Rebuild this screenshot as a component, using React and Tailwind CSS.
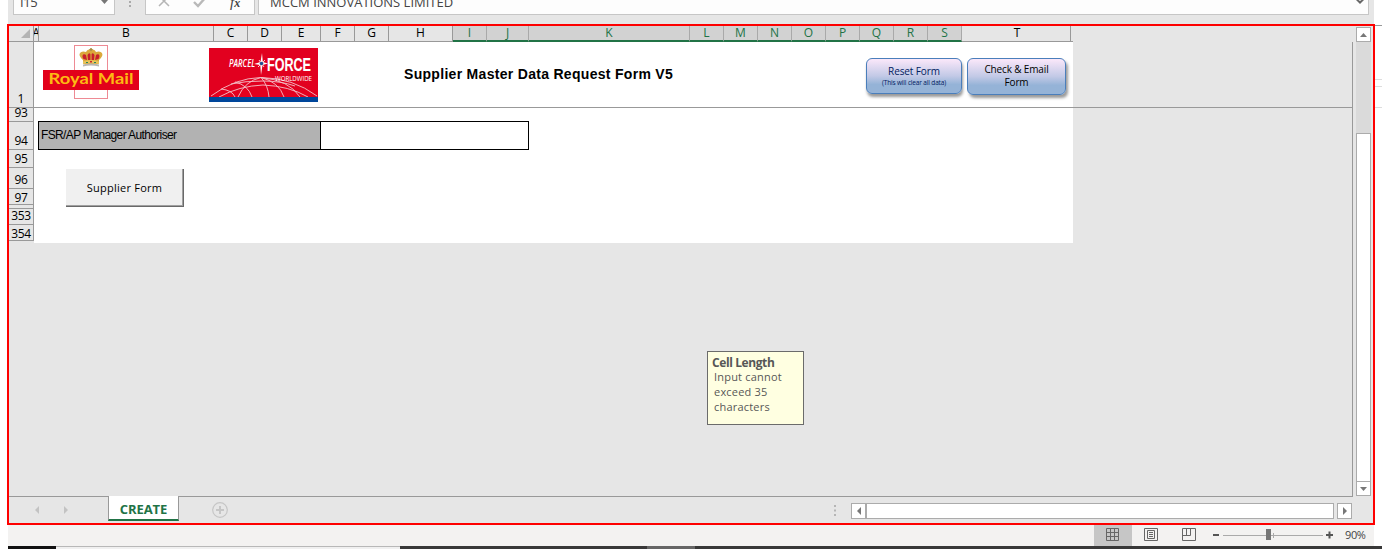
import React from "react";

const UI = "font-['Open_Sans','Noto_Sans',sans-serif]";

const columns = [
  ["A", "w-[5px] overflow-hidden"], ["B", "w-[175px]"], ["C", "w-[34px]"], ["D", "w-[34px]"], ["E", "w-[39px]"],
  ["F", "w-[34px]"], ["G", "w-[34px]"], ["H", "w-[64px]"], ["I", "w-[34px]", 1], ["J", "w-[42px]", 1],
  ["K", "w-[161px]", 1], ["L", "w-[34px]", 1], ["M", "w-[34px]", 1], ["N", "w-[34px]", 1],
  ["O", "w-[34px]", 1], ["P", "w-[34px]", 1], ["Q", "w-[34px]", 1], ["R", "w-[34px]", 1],
  ["S", "w-[34px]", 1], ["T", "w-[109px] pl-[2px]"],
];

const rows = [
  ["93", "h-[14px]"], ["94", "h-[28px]"], ["95", "h-[18px]"], ["96", "h-[21px]"], ["97", "h-[16px]"],
  ["", "h-[4px]"], ["353", "h-[16px]"], ["354", "h-[16px]"],
];

function FormulaBar() {
  return (
    <div className="flex h-[24px] items-start bg-white pl-2">
      <div className="flex h-[24px] w-[1366px] items-start bg-[#e6e6e6] pl-[5px]">
        <div className="flex h-[15px] w-[102px] justify-between border border-t-0 border-[#c6c6c6] bg-[#fdfdfd] pl-[6px] pr-[5px]">
          <span className="-mt-[7px] text-[13px] leading-[18px] tracking-[-0.4px] text-[#444]">I15</span>
          <svg className="h-[5px] w-[9px]" viewBox="0 0 9 5"><path d="M1 0H8L4.5 4Z" fill="#777" /></svg>
        </div>
        <svg className="ml-[14px] h-[10px] w-[3px]" viewBox="0 0 3 10"><path d="M0 1h2v2H0zM0 5h2v2H0z" fill="#aaa" /></svg>
        <div className="ml-[13px] flex h-[15px] w-[110px] border border-t-0 border-[#c6c6c6] bg-[#fdfdfd]">
          <svg className="h-[14px] w-[74px]" viewBox="0 0 74 14" fill="none">
            <path d="M13 -4L23 6M23 -4L13 6" stroke="#b5b5b5" strokeWidth="1.5" />
            <path d="M48 2L52 6L60 -3" stroke="#b9b9b9" strokeWidth="2.4" />
          </svg>
          <span className="-mt-[7px] ml-[10px] font-['Liberation_Serif',serif] text-[15px] italic leading-[18px] text-[#444]">f<span className="text-[12px] font-bold">x</span></span>
        </div>
        <div className="ml-[3px] flex h-[15px] w-[1111px] justify-between border border-t-0 border-[#c6c6c6] bg-[#fdfdfd] pl-[11px] pr-[4px]">
          <span className="-mt-[7px] text-[13px] leading-[18px] text-[#444]">MCCM INNOVATIONS LIMITED</span>
          <svg className="h-[4px] w-[8px]" viewBox="0 0 8 4"><path d="M0 0H2.5L4 1L5.5 0H8L4 4Z" fill="#666" /></svg>
        </div>
      </div>
    </div>
  );
}

function ColumnHeaders() {
  return (
    <div className="flex h-[16px]">
      <div className="flex w-[25px] items-end justify-end border-b border-r border-[#999] pb-[3px] pr-[3px]">
        <svg className="h-[9px] w-[9px]" viewBox="0 0 9 9"><path d="M9 0V9H0Z" fill="#b4b4b4" /></svg>
      </div>
      {columns.map(([name, width, on]) => (
        <div
          key={name}
          className={`${width} flex shrink-0 justify-center border-r text-[12px] leading-[14px] ${
            on ? "border-r-[#a9a9a9] border-b-2 border-b-[#217346] bg-[#d2d2d2] text-[#217346]" : "border-r-[#999] border-b border-b-[#999] text-black"
          }`}
        >
          {name}
        </div>
      ))}
      <div className="w-[2px] border-b border-[#999]" />
    </div>
  );
}

function RoyalMailLogo() {
  return (
    <svg className="mt-[3px] ml-[9px] h-[54px] w-[96px] shrink-0" viewBox="0 0 96 54">
      <rect x="31.5" y=".5" width="33" height="53" fill="#fff" stroke="#ee8a94" />
      <g>
        <path d="M40 15C33 9 38 5 43 7C45 4 47 4 48 6C49 4 51 4 53 7C58 5 63 9 56 15L56 19H40Z" fill="#dba83c" />
        <path d="M40.5 14C38 10 41 8 43 10L44 15ZM45 15L44.5 10Q46 7 47.4 9V15ZM48.6 15V9Q50 7 51.5 10L51 15ZM55.5 14C58 10 55 8 53 10L52 15Z" fill="#c8202c" />
        <path d="M47.2 3h1.6v3h-1.6zM46.3 4h3.4v1h-3.4z" fill="#a88a40" />
        <path d="M40 16.5Q48 14 56 16.5V19Q48 17 40 19Z" fill="#e8c45c" />
        <path d="M40 19.5Q48 17.5 56 19.5V21.5Q48 19.5 40 21.5Z" fill="#b9b6b2" />
        <path d="M43 17h2v1h-2zM51 17h2v1h-2z" fill="#26865a" />
        <path d="M47 16h2v1.4h-2z" fill="#cf2030" />
      </g>
      <rect y="25" width="96" height="20" fill="#e2001a" />
      <text x="5.5" y="39" textLength="85" lengthAdjust="spacingAndGlyphs" fill="#fdb913" fontFamily="Lato, sans-serif" fontWeight="700" fontSize="15">Royal Mail</text>
    </svg>
  );
}

function ParcelforceLogo() {
  return (
    <svg className="mt-[6px] ml-[70px] h-[54px] w-[109px] shrink-0" viewBox="0 0 109 54">
      <rect width="109" height="54" fill="#e2001f" />
      <g fill="none" stroke="#f3c3c9" strokeWidth=".9">
        <path d="M2 48Q26 30 52 29.5Q84 30 108 48" />
        <path d="M12 41Q23 42 26 49M26 34Q39 37 43 49M52 29.5Q36 33 29 49M52 29.5Q59 37 60 49M52 29.5Q70 34 75 49M52 29.5Q80 32 91 49" />
        <path d="M10 49Q30 38 54 37Q80 38 99 49M22 36Q36 33 54 33Q72 33 86 38" />
      </g>
      <rect y="49" width="109" height="5" fill="#00479b" />
      <g fill="#fff" fontFamily="'Open Sans', sans-serif">
        <text x="20" y="19" fontSize="11" fontStyle="italic" fontWeight="600" textLength="26" lengthAdjust="spacingAndGlyphs">PARCEL</text>
        <text x="58" y="23" fontSize="19" fontWeight="600" fontFamily="'Liberation Sans', sans-serif" stroke="#fff" strokeWidth=".1" textLength="44" lengthAdjust="spacingAndGlyphs">FORCE</text>
        <text x="66" y="32.5" fontSize="8" textLength="37" lengthAdjust="spacingAndGlyphs">WORLDWIDE</text>
      </g>
      <path d="M53 5L53.8 14L59 15.5L53.5 17L52 27L51.3 17L45 16L51.5 14Z" fill="#fff" />
      <path d="M50 12L55 19M56 12L49 19" stroke="#fff" strokeWidth=".8" />
      <circle cx="52.5" cy="15.5" r="1.8" fill="#234c91" />
    </svg>
  );
}

function FrozenRow() {
  return (
    <div className="flex h-[66px] border-b border-[#999]">
      <div className="flex w-[25px] items-end justify-center border-r border-[#999] text-[12px] leading-[16px]">1</div>
      <div className="flex w-[1039px] bg-white">
        <RoyalMailLogo />
        <ParcelforceLogo />
        <h1 className="mt-[24px] ml-[86px] w-[272px] shrink-0 whitespace-nowrap font-['Liberation_Sans',sans-serif] text-[14px] font-bold leading-[17px] tracking-[0.3px] text-black">
          Supplier Master Data Request Form V5
        </h1>
        <button className="mt-[16px] ml-[190px] flex h-[36px] w-[96px] shrink-0 flex-col items-center rounded-[6px] border border-[#4a7ebb] bg-linear-to-b from-[#fbe8fa] via-[#c2c9e6] to-[#95b3d7] to-75% pt-[6px] text-[#002060] shadow-[1px_3px_3px_rgba(0,0,0,0.4)]">
          <span className="text-[10px] leading-[13px] tracking-[-0.1px]">Reset Form</span>
          <span className="whitespace-nowrap text-[6.5px] leading-[10px] tracking-[-0.15px]">(This will clear all data)</span>
        </button>
        <button className="mt-[16px] ml-[5px] h-[37px] w-[99px] shrink-0 rounded-[6px] border border-[#4a7ebb] bg-linear-to-b from-[#fbe8fa] via-[#c2c9e6] to-[#95b3d7] to-75% pb-px text-[10px] leading-[13px] tracking-[-0.15px] text-black shadow-[2px_3px_3px_rgba(0,0,0,0.4)]">
          Check &amp; Email
          <br />
          Form
        </button>
      </div>
    </div>
  );
}

function SheetRows() {
  return (
    <div className="flex h-[135px]">
      <div className="w-[25px] shrink-0 text-[12px]">
        {rows.map(([label, height]) => (
          <div key={label} className={`${height} flex items-end justify-center border-b border-r border-[#999]`}>
            <span className={`tracking-[-0.4px] ${label === "97" || label === "354" ? "leading-[13px]" : "leading-[17px]"}`}>{label}</span>
          </div>
        ))}
      </div>
      <div className="w-[1039px] bg-white pt-[13px] pl-[4px]">
        <div className="flex h-[29px] w-[491px] border border-black font-['Liberation_Sans',sans-serif] text-[12px] leading-[26px] text-black">
          <div className="w-[282px] whitespace-nowrap border-r border-black bg-[#b2b2b2] pl-[2px]"><span className="tracking-[-0.63px]">FSR/AP Manager Authoriser</span></div>
        </div>
        <button className="mt-[19px] ml-[28px] h-[38px] w-[118px] border-b border-r border-[#696969] bg-[#f0f0f0] pt-px text-[11px] tracking-[0.25px] text-black shadow-[inset_-1px_-1px_0_#a0a0a0]">
          Supplier Form
        </button>
      </div>
    </div>
  );
}

function VerticalScroll() {
  return (
    <div className="flex w-[15px] flex-col bg-[#dadada]">
      <div className="flex h-[15px] items-center justify-center border border-[#ababab] bg-white">
        <svg className="h-[4px] w-[7px]" viewBox="0 0 7 4"><path d="M3.5 0L7 4H0Z" fill="#777" /></svg>
      </div>
      <div className="mt-[91px] h-[349px] border border-[#ababab] bg-white" />
      <div className="flex h-[14px] items-center justify-center border border-t-0 border-[#ababab] bg-white">
        <svg className="h-[4px] w-[7px]" viewBox="0 0 7 4"><path d="M0 0H7L3.5 4Z" fill="#777" /></svg>
      </div>
    </div>
  );
}

function TabBar() {
  return (
    <div className="flex h-[27px]">
      <svg className="mt-[9px] ml-[26px] h-[8px] w-[34px]" viewBox="0 0 34 8"><path d="M4 0V8L0 4ZM29 0V8L33 4Z" fill="#c3c3c3" /></svg>
      <div className="-mt-px ml-[39px] h-[25px] w-[71px] border-x border-b-2 border-x-[#999] border-b-[#217346] bg-white text-center text-[13px] font-bold leading-[26px] text-[#217346]">
        <span className="tracking-[-0.1px]">CREATE</span>
      </div>
      <svg className="mt-[5px] ml-[33px] h-[16px] w-[16px]" viewBox="0 0 16 16" fill="none" stroke="#c6c6c6"><circle cx="8" cy="8" r="7.3" strokeWidth="1.2" /><path d="M4 8H12M8 4V12" strokeWidth="2" /></svg>
      <svg className="mt-[8px] ml-[606px] h-[11px] w-[2px]" viewBox="0 0 2 11"><path d="M0 0h2v2H0zM0 4.5h2v2H0zM0 9h2v2H0z" fill="#b5b5b5" /></svg>
      <div className="mt-[6px] ml-[15px] flex h-[16px]">
        <div className="flex w-[15px] items-center justify-center border border-[#ababab] bg-white">
          <svg className="h-[8px] w-[4px]" viewBox="0 0 4 8"><path d="M4 0V8L0 4Z" fill="#777" /></svg>
        </div>
        <div className="w-[468px] border border-[#ababab] bg-white" />
        <div className="ml-[3px] flex w-[15px] items-center justify-center border border-[#ababab] bg-white">
          <svg className="h-[8px] w-[4px]" viewBox="0 0 4 8"><path d="M0 0V8L4 4Z" fill="#777" /></svg>
        </div>
      </div>
    </div>
  );
}

function StatusBar() {
  return (
    <div className="ml-2 flex h-[21px] w-[1366px] bg-[#f3f2f1]">
      <div className="ml-[1086px] w-[38px] bg-[#c6c6c6] pt-[3px] pl-[12px]">
        <svg className="h-[13px] w-[13px]" viewBox="0 0 13 13" fill="none" stroke="#666"><path d="M.5 .5H12.5V12.5H.5ZM4.5 0V13M8.5 0V13M0 4.5H13M0 8.5H13" /></svg>
      </div>
      <svg className="mt-[3px] ml-[12px] h-[13px] w-[14px]" viewBox="0 0 14 13" fill="none" stroke="#666"><path d="M.5 .5H13.5V12.5H.5ZM3.5 2.5H10.5V10.5H3.5ZM5 4.5H9M5 6.5H9M5 8.5H9" /></svg>
      <svg className="mt-[3px] ml-[24px] h-[13px] w-[14px]" viewBox="0 0 14 13" fill="none" stroke="#666"><path d="M.5 .5H13.5V12.5H.5ZM.5 7.5H8.5V.5M4.5 .5V7.5" /></svg>
      <svg className="mt-[3px] ml-[17px] h-[14px] w-[122px]" viewBox="0 0 122 14"><path d="M0 6h6v2H0zM113 6h7v2h-7zM115.5 3.5h2v7h-2z" fill="#555" /><path d="M10 7h100v1H10zM60 5h1v5h-1z" fill="#aaa" /><path d="M53 1h5v11h-5z" fill="#777" /></svg>
      <span className="ml-[10px] text-[11px] leading-[19px] tracking-[-0.4px] text-[#444]">90%</span>
    </div>
  );
}

export default function App() {
  return (
    <div className={`relative h-[549px] w-[1382px] overflow-hidden bg-white ${UI}`}>
      <FormulaBar />
      <div className="flex">
        <div className="ml-[7px] h-[501px] w-[1368px] border-2 border-[#fe0000] bg-[#e6e6e6]">
          <div className="flex">
            <div className="w-[1344px] border-b border-[#999]">
              <ColumnHeaders />
              <div className="h-[454px] border-r border-[#999]">
                <FrozenRow />
                <SheetRows />
              </div>
            </div>
            <div className="ml-[3px] pt-[1px]"><VerticalScroll /></div>
          </div>
          <TabBar />
        </div>
        <div className="flex w-[7px] flex-col pt-px">
          <div className="h-[55px] border-b border-t border-t-[#999] border-b-[#ddd]" />
          <div className="h-[7px] border-b border-[#ddd]" />
          <div className="h-[21px] border-b border-[#ddd]" />
        </div>
      </div>
      <StatusBar />
      <div className="ml-2 flex h-[3px]">
        <div className="w-[48px] bg-[#111]" />
        <div className="w-[344px] border-t border-[#b8b8b8] bg-[#f0f0f0]" />
        <div className="w-[247px] bg-[#383838]" />
        <div className="w-[48px] bg-[#666]" />
        <div className="flex-1 bg-[#383838]" />
      </div>
      <aside className="absolute top-[351px] left-[707px] h-[74px] w-[97px] border border-[#6b6b6b] bg-[#ffffe1] pt-[3px] pl-[4px] text-[#575757]">
        <strong className="block text-[12px] leading-[15px] tracking-[-0.4px]">Cell Length</strong>
        <p className="-mt-px pl-[2px] text-[11px] leading-[15px] tracking-[0.2px]">Input cannot<br />exceed 35<br />characters</p>
      </aside>
    </div>
  );
}
